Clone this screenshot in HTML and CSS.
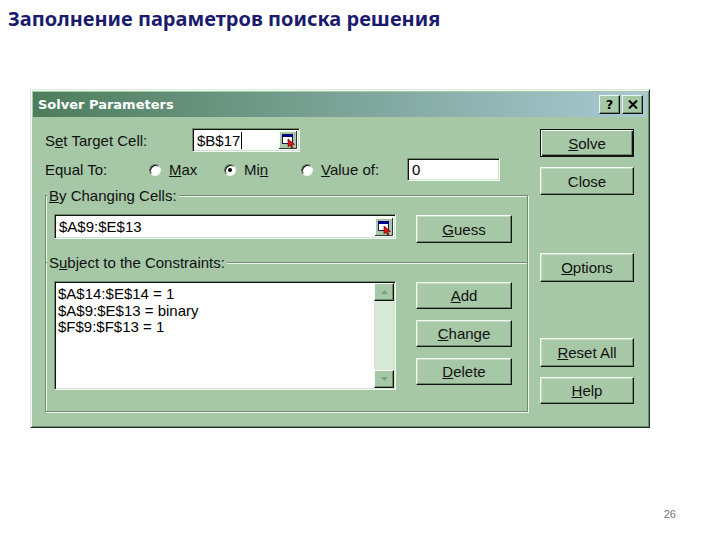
FILE: index.html
```html
<!DOCTYPE html>
<html lang="ru">
<head>
<meta charset="utf-8">
<title>Solver Parameters</title>
<link rel="stylesheet" href="styles.css">
</head>
<body>
<h1 class="page-title">Заполнение параметров поиска решения</h1>
<div class="dialog">
  <div class="titlebar">
    <span class="titlebar-text">Solver Parameters</span>
    <div class="titlebar-buttons">
      <span class="tb-btn tb-help">?</span>
      <span class="tb-btn"><svg width="10" height="9" viewBox="0 0 10 9"><path d="M1 0.5 L9 8.5 M9 0.5 L1 8.5" stroke="#000" stroke-width="2"/></svg></span>
    </div>
  </div>
  <div class="dialog-body">
    <div class="main-col">
      <div class="row row-target">
        <span class="lbl lbl-target">S<u>e</u>t Target Cell:</span>
        <div class="input input-target">
          <span>$B$17</span><span class="caret"></span>
          <span class="ref-btn"><svg width="18" height="18" viewBox="0 0 18 18"><rect x="0" y="0" width="18" height="18" fill="#a6c8a6"/><path d="M0 17.5 H17.5 V0" stroke="#2a3a2a" fill="none"/><path d="M0.5 17 V0.5 H17" stroke="#f2faf2" fill="none"/><rect x="3.5" y="3.5" width="10" height="9" fill="#fff" stroke="#1a1a4a"/><rect x="3" y="3" width="11" height="3" fill="#000080"/><path d="M9 8 L9 16 L11 14 L12.5 17 L14 16.3 L12.6 13.4 L15.5 13.4 Z" fill="#e01010" stroke="#5a0000" stroke-width="0.6"/></svg></span>
        </div>
      </div>
      <div class="row row-equal">
        <span class="lbl lbl-equal">Equal To:</span>
        <span class="radio-item item-max"><span class="radio"></span><span><u>M</u>ax</span></span>
        <span class="radio-item item-min"><span class="radio checked"></span><span>Mi<u>n</u></span></span>
        <span class="radio-item item-value"><span class="radio"></span><span><u>V</u>alue of:</span></span>
        <div class="input input-value">0</div>
      </div>
      <div class="group group-changing">
        <span class="group-label"><u>B</u>y Changing Cells:</span>
        <div class="group-row">
          <div class="input input-wide">
            <span>$A$9:$E$13</span>
            <span class="ref-btn"><svg width="18" height="18" viewBox="0 0 18 18"><rect x="0" y="0" width="18" height="18" fill="#a6c8a6"/><path d="M0 17.5 H17.5 V0" stroke="#2a3a2a" fill="none"/><path d="M0.5 17 V0.5 H17" stroke="#f2faf2" fill="none"/><rect x="3.5" y="3.5" width="10" height="9" fill="#fff" stroke="#1a1a4a"/><rect x="3" y="3" width="11" height="3" fill="#000080"/><path d="M9 8 L9 16 L11 14 L12.5 17 L14 16.3 L12.6 13.4 L15.5 13.4 Z" fill="#e01010" stroke="#5a0000" stroke-width="0.6"/></svg></span>
          </div>
          <div class="btn btn-guess"><span><u>G</u>uess</span></div>
        </div>
      </div>
      <div class="group group-constraints">
        <span class="group-label">S<u>u</u>bject to the Constraints:</span>
        <div class="group-row">
          <div class="listbox">
            <div class="list-items">
              <div>$A$14:$E$14 = 1</div>
              <div>$A$9:$E$13 = binary</div>
              <div>$F$9:$F$13 = 1</div>
            </div>
            <div class="scrollbar">
              <span class="sb-btn"><svg width="7" height="4" viewBox="0 0 7 4"><path d="M0 4 L3.5 0 L7 4 Z" fill="#7f9f80"/></svg></span>
              <span class="sb-btn"><svg width="7" height="4" viewBox="0 0 7 4"><path d="M0 0 L3.5 4 L7 0 Z" fill="#7f9f80"/></svg></span>
            </div>
          </div>
          <div class="btn-col">
            <div class="btn btn-small"><span><u>A</u>dd</span></div>
            <div class="btn btn-small"><span><u>C</u>hange</span></div>
            <div class="btn btn-small"><span><u>D</u>elete</span></div>
          </div>
        </div>
      </div>
    </div>
    <div class="side-col">
      <div class="btn btn-default btn-solve"><span><u>S</u>olve</span></div>
      <div class="btn btn-close"><span>Close</span></div>
      <div class="btn btn-options"><span><u>O</u>ptions</span></div>
      <div class="btn btn-reset"><span><u>R</u>eset All</span></div>
      <div class="btn btn-help"><span><u>H</u>elp</span></div>
    </div>
  </div>
</div>
<div class="page-number">26</div>
</body>
</html>
```
FILE: styles.css
```css
* { box-sizing: border-box; }

body {
  margin: 0;
  width: 720px;
  height: 540px;
  overflow: hidden;
  background: #fff;
  font-family: "Liberation Sans", Arial, sans-serif;
}

.page-title {
  margin: 0;
  padding: 5px 0 0 8px;
  font-family: "Noto Sans", sans-serif;
  font-weight: 700;
  font-size: 20px;
  line-height: 28px;
  color: #1b1b6e;
}

.dialog {
  margin: 56px 0 0 30px;
  width: 620px;
  height: 339px;
  padding: 2px;
  display: flex;
  flex-direction: column;
  background: #a6c8a6;
  border: 1px solid;
  border-color: #d8ead8 #1e2e1e #1e2e1e #d8ead8;
  box-shadow: inset 1px 1px 0 #f4fbf4, inset -1px -1px 0 #6d8d6e;
}

.titlebar {
  flex: none;
  height: 25px;
  display: flex;
  align-items: center;
  justify-content: space-between;
  padding: 0 4px 0 5px;
  background: linear-gradient(to right, #4d7d5b, #a9c9d3);
}

.titlebar-text {
  color: #fff;
  font-family: "DejaVu Sans", sans-serif;
  font-weight: 700;
  font-size: 13px;
}

.titlebar-buttons {
  display: flex;
  gap: 2px;
}

.tb-btn {
  width: 21px;
  height: 19px;
  display: flex;
  align-items: center;
  justify-content: center;
  background: #a6c8a6;
  border: 1px solid;
  border-color: #eef8ee #111 #111 #eef8ee;
  box-shadow: inset -1px -1px 0 #6d8d6e;
}

.tb-help {
  font-family: "DejaVu Sans", sans-serif;
  font-weight: 700;
  font-size: 13px;
  color: #000;
}

.dialog-body {
  flex: 1;
  display: flex;
  padding-left: 12px;
}

.main-col {
  width: 483px;
  display: flex;
  flex-direction: column;
}

.side-col {
  width: 94px;
  margin-left: 12px;
  display: flex;
  flex-direction: column;
}

.row {
  display: flex;
  align-items: center;
  font-size: 15px;
  color: #111;
}

.row-target {
  margin-top: 11px;
  height: 24px;
}

.lbl-target { width: 147px; }

.row-equal {
  margin-top: 6px;
  height: 23px;
}

.lbl-equal { width: 104px; }

.radio-item {
  display: flex;
  align-items: center;
  gap: 8px;
}

.item-max { width: 75px; }
.item-min { width: 77px; }
.item-value { width: 106px; }

.radio {
  width: 12px;
  height: 12px;
  border-radius: 50%;
  background: #fff;
  border: 1px solid;
  border-color: #5d7d5e #eef8ee #eef8ee #5d7d5e;
  box-shadow: inset 1px 1px 0 #111;
  display: flex;
  align-items: center;
  justify-content: center;
}

.radio.checked::after {
  content: "";
  width: 4px;
  height: 4px;
  border-radius: 50%;
  background: #000;
}

.input {
  display: flex;
  align-items: center;
  padding-left: 4px;
  background: #fff;
  font-size: 15px;
  color: #000;
  border: 1px solid;
  border-color: #6d8d6e #f2faf2 #f2faf2 #6d8d6e;
  box-shadow: inset 1px 1px 0 #111, inset -1px -1px 0 #cfe2cf;
}

.input-target { width: 108px; height: 24px; }
.input-value { width: 93px; height: 23px; }
.input-wide { width: 342px; height: 25px; }

.caret {
  width: 1px;
  height: 17px;
  margin-left: 1px;
  background: #000;
}

.ref-btn {
  margin-left: auto;
  margin-right: 2px;
  display: flex;
}

.group {
  display: flex;
  flex-direction: column;
  border: 1px solid #6d8d6e;
  box-shadow: inset 1px 1px 0 #eef8ee, 1px 1px 0 #eef8ee;
  font-size: 15px;
  color: #111;
}

.group-changing {
  margin-top: 14px;
  border-bottom: none;
  padding-bottom: 19px;
}

.group-constraints {
  padding-bottom: 21px;
}

.group-label {
  align-self: flex-start;
  margin: -9px 0 0 1px;
  padding: 0 2px;
  line-height: 17px;
  background: #a6c8a6;
}

.group-row {
  display: flex;
  align-items: flex-start;
  gap: 20px;
  margin-top: 10px;
  padding-left: 8px;
}

.btn {
  display: flex;
  align-items: center;
  justify-content: center;
  background: #a6c8a6;
  font-size: 15px;
  color: #111;
  border: 1px solid;
  border-color: #f2faf2 #111 #111 #f2faf2;
  box-shadow: inset -1px -1px 0 #6d8d6e, inset 1px 1px 0 #c4dcc4;
}

.btn-guess {
  width: 96px;
  height: 28px;
  margin-top: 1px;
}

.btn-col {
  display: flex;
  flex-direction: column;
  gap: 11px;
  margin-top: 1px;
}

.btn-small {
  width: 96px;
  height: 27px;
}

.btn-default {
  border-color: #111;
  box-shadow: inset 1px 1px 0 #f2faf2, inset -1px -1px 0 #111, inset -2px -2px 0 #6d8d6e;
}

.btn-solve { height: 28px; margin-top: 12px; }
.btn-close { height: 28px; margin-top: 10px; }
.btn-options { height: 29px; margin-top: 58px; }
.btn-reset { height: 29px; margin-top: 56px; }
.btn-help { height: 27px; margin-top: 10px; }

.listbox {
  width: 342px;
  height: 109px;
  display: flex;
  padding: 1px;
  background: #fff;
  border: 1px solid;
  border-color: #6d8d6e #f2faf2 #f2faf2 #6d8d6e;
  box-shadow: inset 1px 1px 0 #111, inset -1px -1px 0 #cfe2cf;
}

.list-items {
  flex: 1;
  padding: 3px 0 0 2px;
  font-size: 15px;
  line-height: 16.5px;
  color: #000;
}

.scrollbar {
  width: 20px;
  display: flex;
  flex-direction: column;
  justify-content: space-between;
  background: #d6e8d6;
}

.sb-btn {
  height: 18px;
  display: flex;
  align-items: center;
  justify-content: center;
  background: #a6c8a6;
  border: 1px solid;
  border-color: #f2faf2 #111 #111 #f2faf2;
  box-shadow: inset -1px -1px 0 #6d8d6e;
}

.page-number {
  margin-top: 79px;
  padding-right: 44px;
  text-align: right;
  font-size: 11px;
  line-height: 14px;
  color: #777;
}
```
